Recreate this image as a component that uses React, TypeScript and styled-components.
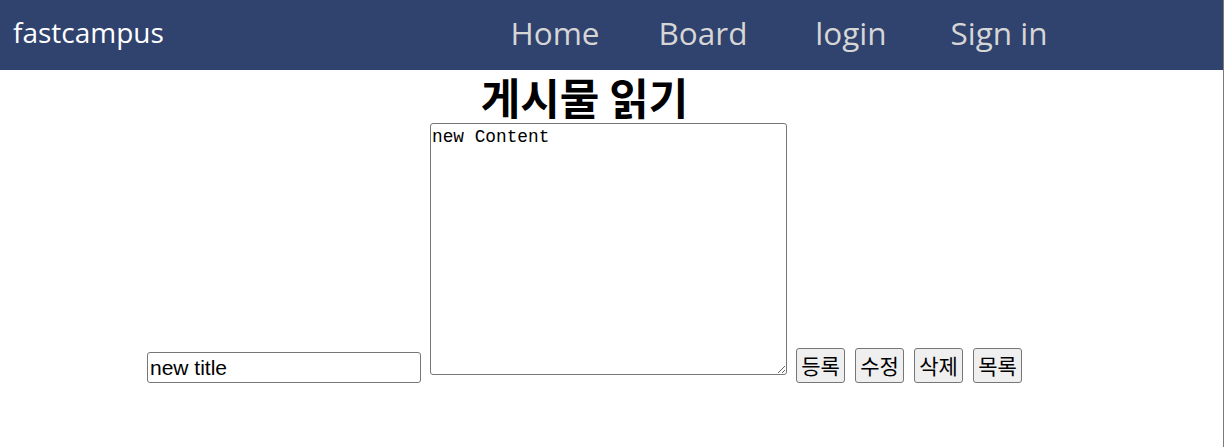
import React, { FC } from "react";
import styled, { createGlobalStyle } from "styled-components";

const GlobalStyle = createGlobalStyle`
	html, body {
		margin: 0;
		padding: 0;
		background: #fff;
	}
`;

const Page = styled.div`
	width: 1223px;
	min-height: 100vh;
	border-right: 1px solid #7b7b7b;
	font-family: "Noto Sans", "Open Sans", sans-serif;
`;

const NavBar = styled.nav`
	box-sizing: border-box;
	height: 70px;
	padding-bottom: 6px;
	background: #30426e;
	display: flex;
	align-items: center;
`;

const Brand = styled.a`
	flex: 0 0 468px;
	padding-left: 13px;
	font-family: "Open Sans", sans-serif;
	font-size: 28px;
	color: #fff;
	text-decoration: none;
`;

const NavLink = styled.a`
	width: 148px;
	text-align: center;
	font-family: "Open Sans", sans-serif;
	font-size: 31.5px;
	color: #d6d6d6;
	text-decoration: none;
`;

const Main = styled.main`
	width: 1169px;
	display: flex;
	flex-direction: column;
	align-items: center;
`;

const Title = styled.h1`
	margin: 0;
	height: 53px;
	line-height: 52px;
	font-family: "Noto Sans CJK KR", sans-serif;
	font-size: 43px;
	font-weight: 700;
	color: #000;
`;

const Row = styled.div`
	display: flex;
	align-items: flex-end;
	gap: 9px;
`;

const TitleInput = styled.input`
	box-sizing: border-box;
	width: 274px;
	height: 31px;
	padding: 1px 2px;
	border: 1px solid #767676;
	border-radius: 3px;
	font-family: "Liberation Sans", Arial, sans-serif;
	font-size: 21px;
	color: #000;
`;

const ContentArea = styled.textarea`
	box-sizing: border-box;
	width: 357px;
	height: 252px;
	margin: 0 0 8px;
	padding: 2px 1px;
	border: 1px solid #767676;
	border-radius: 3px;
	font-family: "Liberation Mono", monospace;
	font-size: 17.8px;
	line-height: 22px;
	color: #000;
	resize: both;
`;

const Buttons = styled.div`
	display: flex;
	gap: 10px;
`;

const Button = styled.button`
	box-sizing: border-box;
	width: 49px;
	height: 35px;
	padding: 0;
	background: #efefef;
	border: 1px solid #767676;
	border-radius: 3px;
	font-family: "Noto Sans CJK KR", sans-serif;
	font-size: 21px;
	line-height: 1;
	color: #000;
`;

const App: FC = () => {
	return (
		<>
			<GlobalStyle />
			<Page>
				<NavBar>
					<Brand href="#">fastcampus</Brand>
					<NavLink href="#">Home</NavLink>
					<NavLink href="#">Board</NavLink>
					<NavLink href="#">login</NavLink>
					<NavLink href="#">Sign in</NavLink>
				</NavBar>

				<Main>
					<Title>게시물 읽기</Title>
					<Row>
						<TitleInput defaultValue="new title" />
						<ContentArea defaultValue="new Content" />
						<Buttons>
							<Button>등록</Button>
							<Button>수정</Button>
							<Button>삭제</Button>
							<Button>목록</Button>
						</Buttons>
					</Row>
				</Main>
			</Page>
		</>
	);
};

export default App;
